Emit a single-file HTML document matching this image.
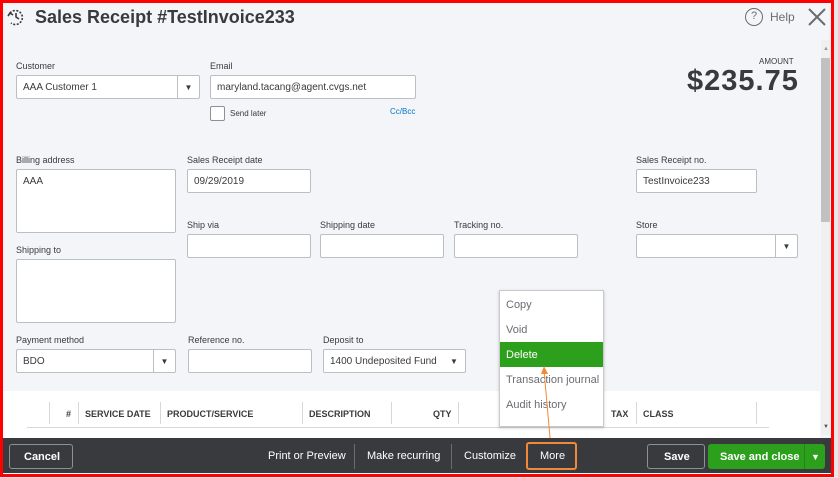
<!DOCTYPE html>
<html><head><style>
*{box-sizing:border-box;margin:0;padding:0}
body{width:838px;height:478px;overflow:hidden;background:#e8e8e8;font-family:"Liberation Sans",sans-serif;position:relative}
.a{position:absolute}
.lbl{position:absolute;font-size:9px;color:#393a3d}
.in{position:absolute;background:#fff;border:1px solid #babec5;border-radius:2px;font-size:10px;color:#393a3d;padding-left:6px;display:flex;align-items:center}
.dd{position:absolute;right:0;top:0;bottom:0;width:22px;border-left:1px solid #babec5;display:flex;align-items:center;justify-content:center;font-size:8px}
.th{position:absolute;top:409px;font-size:9px;font-weight:bold;color:#393a3d}
.vl{position:absolute;top:402px;height:22px;width:1px;background:#d4d7dc}
.mi{position:absolute;left:500px;width:103px;height:25px;font-size:11px;color:#6b6c72;padding-left:6px;display:flex;align-items:center}
.fb{position:absolute;color:#fff;font-size:11px}
</style></head><body>
<div class="a" style="left:0;top:0;width:834px;height:477px;background:#f4f5f8;border:3px solid #f00"></div>
<svg class="a" style="left:6px;top:7px" width="20" height="20" viewBox="0 0 20 20" fill="none" stroke="#393a3d" stroke-width="1.6"><path d="M4 6a7 7 0 1 1 1 10" stroke-dasharray="2 1.5"/><path d="M10 6v4l3 2"/><path d="M2 9l2-3 3 2"/></svg>
<div class="a" style="left:35px;top:7px;font-size:18px;font-weight:bold;color:#393a3d">Sales Receipt #TestInvoice233</div>
<div class="a" style="left:745px;top:8px;width:18px;height:18px;border:1.5px solid #6b6c72;border-radius:50%;font-size:11px;text-align:center;line-height:15px;color:#6b6c72">?</div>
<div class="a" style="left:770px;top:10px;font-size:12px;color:#6b6c72">Help</div>
<svg class="a" style="left:808px;top:8px" width="18" height="18"><path d="M1 1L17 17M17 1L1 17" stroke="#6b6c72" stroke-width="2"/></svg>
<div class="a" style="left:821px;top:40px;width:10px;height:395px;background:#f0f0f0"></div>
<div class="a" style="left:821px;top:58px;width:9px;height:164px;background:#c1c1c1"></div>
<div class="a" style="left:823px;top:46px;font-size:6px;color:#999">▲</div>
<div class="a" style="left:823px;top:424px;font-size:6px;color:#555">▼</div>

<div class="lbl" style="left:16px;top:61px">Customer</div>
<div class="in" style="left:16px;top:75px;width:184px;height:24px">AAA Customer 1<div class="dd">▼</div></div>
<div class="lbl" style="left:210px;top:61px">Email</div>
<div class="in" style="left:210px;top:75px;width:206px;height:24px">maryland.tacang@agent.cvgs.net</div>
<div class="a" style="left:210px;top:106px;width:15px;height:15px;border:1px solid #8d9096;background:#fff;border-radius:2px"></div>
<div class="lbl" style="left:230px;top:109px;font-size:8px">Send later</div>
<div class="lbl" style="left:390px;top:107px;font-size:8px;color:#0077c5">Cc/Bcc</div>
<div class="lbl" style="left:759px;top:57px;font-size:8px">AMOUNT</div>
<div class="a" style="left:687px;top:65px;font-size:29px;font-weight:bold;color:#393a3d;letter-spacing:1px">$235.75</div>

<div class="lbl" style="left:16px;top:155px">Billing address</div>
<div class="in" style="left:16px;top:169px;width:160px;height:64px;align-items:flex-start;padding-top:6px">AAA</div>
<div class="lbl" style="left:187px;top:155px">Sales Receipt date</div>
<div class="in" style="left:187px;top:169px;width:124px;height:24px">09/29/2019</div>
<div class="lbl" style="left:636px;top:155px">Sales Receipt no.</div>
<div class="in" style="left:636px;top:169px;width:121px;height:24px">TestInvoice233</div>

<div class="lbl" style="left:187px;top:220px">Ship via</div>
<div class="in" style="left:187px;top:234px;width:124px;height:24px"></div>
<div class="lbl" style="left:320px;top:220px">Shipping date</div>
<div class="in" style="left:320px;top:234px;width:124px;height:24px"></div>
<div class="lbl" style="left:454px;top:220px">Tracking no.</div>
<div class="in" style="left:454px;top:234px;width:124px;height:24px"></div>
<div class="lbl" style="left:636px;top:220px">Store</div>
<div class="in" style="left:636px;top:234px;width:162px;height:24px"><div class="dd">▼</div></div>
<div class="lbl" style="left:16px;top:245px">Shipping to</div>
<div class="in" style="left:16px;top:259px;width:160px;height:64px"></div>

<div class="lbl" style="left:16px;top:335px">Payment method</div>
<div class="in" style="left:16px;top:349px;width:160px;height:24px">BDO<div class="dd">▼</div></div>
<div class="lbl" style="left:188px;top:335px">Reference no.</div>
<div class="in" style="left:188px;top:349px;width:124px;height:24px"></div>
<div class="lbl" style="left:323px;top:335px">Deposit to</div>
<div class="in" style="left:323px;top:349px;width:143px;height:24px">1400 Undeposited Fund<div class="dd" style="border:none">▼</div></div>

<div class="a" style="left:3px;top:391px;width:817px;height:47px;background:#fff"></div>
<div class="a" style="left:27px;top:427px;width:342px;height:1px;background:#d4d7dc"></div>
<div class="a" style="left:369px;top:427px;width:400px;height:1px;background:#d4d7dc"></div>
<div class="vl" style="left:49px"></div><div class="vl" style="left:78px"></div><div class="vl" style="left:160px"></div><div class="vl" style="left:302px"></div><div class="vl" style="left:391px"></div><div class="vl" style="left:458px"></div><div class="vl" style="left:603px"></div><div class="vl" style="left:636px"></div><div class="vl" style="left:756px"></div>
<div class="th" style="left:66px">#</div>
<div class="th" style="left:85px">SERVICE DATE</div>
<div class="th" style="left:167px">PRODUCT/SERVICE</div>
<div class="th" style="left:309px">DESCRIPTION</div>
<div class="th" style="left:433px">QTY</div>
<div class="th" style="left:611px">TAX</div>
<div class="th" style="left:643px">CLASS</div>

<div class="a" style="left:499px;top:290px;width:105px;height:137px;background:#fff;border:1px solid #c8cacd;box-shadow:0 1px 3px rgba(0,0,0,.2)"></div>
<div class="mi" style="top:292px">Copy</div>
<div class="mi" style="top:317px">Void</div>
<div class="mi" style="top:342px;background:#2ca01c;color:#fff">Delete</div>
<div class="mi" style="top:367px">Transaction journal</div>
<div class="mi" style="top:392px">Audit history</div>
<svg class="a" style="left:540px;top:365px" width="20" height="80"><path d="M10.5 78L4 5" stroke="#f08a3a" stroke-width="1"/><path d="M4 1L1 9H8Z" fill="#f08a3a"/></svg>

<div class="a" style="left:3px;top:438px;width:828px;height:35px;background:#393a3d"></div>
<div class="a" style="left:9px;top:444px;width:64px;height:25px;border:1px solid #8d9096;border-radius:3px"></div>
<div class="fb" style="left:24px;top:451px;font-weight:bold">Cancel</div>
<div class="fb" style="left:268px;top:450px">Print or Preview</div>
<div class="a" style="left:354px;top:444px;width:1px;height:25px;background:#6b6c72"></div>
<div class="fb" style="left:367px;top:450px">Make recurring</div>
<div class="a" style="left:451px;top:444px;width:1px;height:25px;background:#6b6c72"></div>
<div class="fb" style="left:464px;top:450px">Customize</div>
<div class="a" style="left:526px;top:442px;width:51px;height:28px;border:2px solid #f08a3a;border-radius:3px"></div>
<div class="fb" style="left:540px;top:450px">More</div>
<div class="a" style="left:647px;top:444px;width:58px;height:25px;border:1px solid #8d9096;border-radius:3px"></div>
<div class="fb" style="left:664px;top:451px;font-weight:bold">Save</div>
<div class="a" style="left:708px;top:444px;width:117px;height:25px;background:#2ca01c;border-radius:3px"></div>
<div class="a" style="left:804px;top:444px;width:1px;height:25px;background:#238516"></div>
<div class="fb" style="left:720px;top:451px;font-weight:bold">Save and close</div>
<div class="fb" style="left:811px;top:452px;font-size:9px">▼</div>
</body></html>
